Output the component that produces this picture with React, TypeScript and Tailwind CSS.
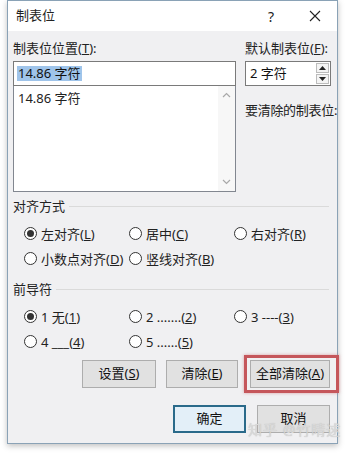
import React from "react";

const font = { fontFamily: '"Noto Sans", "Noto Sans CJK SC", sans-serif' };

function Radio({ checked, label }: { checked?: boolean; label: React.ReactNode }) {
  return (
    <div className="flex items-center h-[25px]">
      <span className="w-[13px] h-[13px] rounded-full border border-[#333] bg-white flex items-center justify-center shrink-0">
        {checked && <span className="w-[7px] h-[7px] rounded-full bg-[#333]" />}
      </span>
      <span className="ml-[4px] text-[13px] leading-[16px] text-[#222] whitespace-nowrap">{label}</span>
    </div>
  );
}

function Group({ title }: { title: string }) {
  return (
    <div className="flex items-center h-[16px]">
      <span className="text-[13px] leading-[16px] text-[#222]">{title}</span>
      <span className="flex-1 h-px bg-[#dadada] ml-[4px] mr-[2px]" />
    </div>
  );
}

function Btn({ children, w, primary }: { children: React.ReactNode; w: string; primary?: boolean }) {
  return (
    <div
      className={`${w} h-[28px] flex items-center justify-center text-[13px] text-[#111] ${
        primary ? "border-2 border-[#2a6a8a] bg-[#e3eff8]" : "border border-[#adadad] bg-[#e1e1e1]"
      }`}
    >
      {children}
    </div>
  );
}

export default function App() {
  return (
    <div className="w-[346px] h-[453px] bg-white overflow-hidden relative" style={font}>
      <div className="ml-[7px] w-[331px] h-[444px] border border-[#8aa2b6] bg-[#f0f0f2] flex flex-col shadow-[0_2px_6px_rgba(0,0,0,0.25)]">
        {/* title bar */}
        <div className="h-[30px] bg-white flex items-center pl-[8px] shrink-0">
          <span className="text-[13px] text-[#222]">制表位</span>
          <span className="ml-auto mr-[35px] text-[14px] text-[#222]">?</span>
          <svg width="12" height="12" viewBox="0 0 12 12" className="mr-[16px]">
            <path d="M1 1L11 11M11 1L1 11" stroke="#222" strokeWidth="1.1" />
          </svg>
        </div>

        <div className="flex-1 pl-[5px] pr-[6px] pt-[9px] relative">
          {/* top area */}
          <div className="flex">
            <div className="w-[223px]">
              <div className="text-[13px] leading-[16px] text-[#222]">
                制表位位置(<u>T</u>):
              </div>
              <div className="mt-[5px] h-[25px] border border-[#7a7a7a] bg-white flex items-center pl-[3px]">
                <span className="bg-[#9fc4ea] text-[13px] leading-[15px] text-[#111] px-px">14.86 字符</span>
              </div>
              <div className="h-[106px] border border-t-0 border-[#828790] bg-white flex">
                <div className="flex-1 pl-[4px] pt-[4px] text-[13px] leading-[16px] text-[#222]">14.86 字符</div>
                <div className="w-[17px] bg-[#f7f7f7] flex flex-col items-center justify-between py-[6px]">
                  <svg width="9" height="6" viewBox="0 0 9 6">
                    <path d="M1 5L4.5 1.5L8 5" stroke="#a8a8a8" fill="none" strokeWidth="1.2" />
                  </svg>
                  <svg width="9" height="6" viewBox="0 0 9 6">
                    <path d="M1 1L4.5 4.5L8 1" stroke="#a8a8a8" fill="none" strokeWidth="1.2" />
                  </svg>
                </div>
              </div>
            </div>

            <div className="ml-[9px] w-[86px]">
              <div className="text-[13px] leading-[16px] text-[#222] whitespace-nowrap">
                默认制表位(<u>F</u>):
              </div>
              <div className="mt-[5px] h-[25px] border border-[#7a7a7a] bg-white flex">
                <div className="flex-1 flex items-center pl-[4px] text-[13px] text-[#111]">2 字符</div>
                <div className="w-[15px] flex flex-col p-px gap-px">
                  <div className="flex-1 border border-[#bcbcbc] bg-[#f4f4f4] flex items-center justify-center">
                    <svg width="7" height="4" viewBox="0 0 7 4">
                      <path d="M0 4L3.5 0L7 4Z" fill="#222" />
                    </svg>
                  </div>
                  <div className="flex-1 border border-[#bcbcbc] bg-[#f4f4f4] flex items-center justify-center">
                    <svg width="7" height="4" viewBox="0 0 7 4">
                      <path d="M0 0L3.5 4L7 0Z" fill="#222" />
                    </svg>
                  </div>
                </div>
              </div>
              <div className="mt-[16px] text-[13px] leading-[16px] text-[#222] whitespace-nowrap tracking-[-0.3px]">
                要清除的制表位:
              </div>
            </div>
          </div>

          {/* alignment */}
          <div className="mt-[6px]">
            <Group title="对齐方式" />
            <div className="grid grid-cols-[105px_105px_1fr] pl-[11px] mt-[7px]">
              <Radio checked label={<>左对齐(<u>L</u>)</>} />
              <Radio label={<>居中(<u>C</u>)</>} />
              <Radio label={<>右对齐(<u>R</u>)</>} />
              <Radio label={<>小数点对齐(<u>D</u>)</>} />
              <Radio label={<>竖线对齐(<u>B</u>)</>} />
            </div>
          </div>

          {/* leader */}
          <div className="mt-[10px]">
            <Group title="前导符" />
            <div className="grid grid-cols-[105px_105px_1fr] pl-[11px] mt-[7px]">
              <Radio checked label={<>1 无(<u>1</u>)</>} />
              <Radio label={<>2 .......(<u>2</u>)</>} />
              <Radio label={<>3 ----(<u>3</u>)</>} />
              <Radio label={<>4 ___(<u>4</u>)</>} />
              <Radio label={<>5 ......(<u>5</u>)</>} />
            </div>
          </div>

          {/* action buttons */}
          <div className="flex mt-[6px] pl-[69px]">
            <Btn w="w-[74px]">
              设置(<u>S</u>)
            </Btn>
            <div className="ml-[10px]">
              <Btn w="w-[72px]">
                清除(<u>E</u>)
              </Btn>
            </div>
            <div className="ml-[12px] relative">
              <Btn w="w-[80px]">
                全部清除(<u>A</u>)
              </Btn>
              <div className="absolute -left-[6px] -top-[5px] -right-[9px] -bottom-[5px] border-[3px] border-[#c5565b] shadow-[0_0_3px_rgba(200,80,85,0.5)]" />
            </div>
          </div>

          {/* ok / cancel */}
          <div className="flex mt-[17px] pl-[160px]">
            <Btn w="w-[73px]" primary>
              确定
            </Btn>
            <div className="ml-[11px]">
              <Btn w="w-[73px]">取消</Btn>
            </div>
          </div>

          <div className="absolute left-[240px] top-[391px] text-[14px] leading-[16px] text-[#d9d9d9] whitespace-nowrap tracking-[1px] [text-shadow:0_0_1px_rgba(120,120,120,0.4)]">
            知乎 @竹晴逑
          </div>
        </div>
      </div>
    </div>
  );
}
